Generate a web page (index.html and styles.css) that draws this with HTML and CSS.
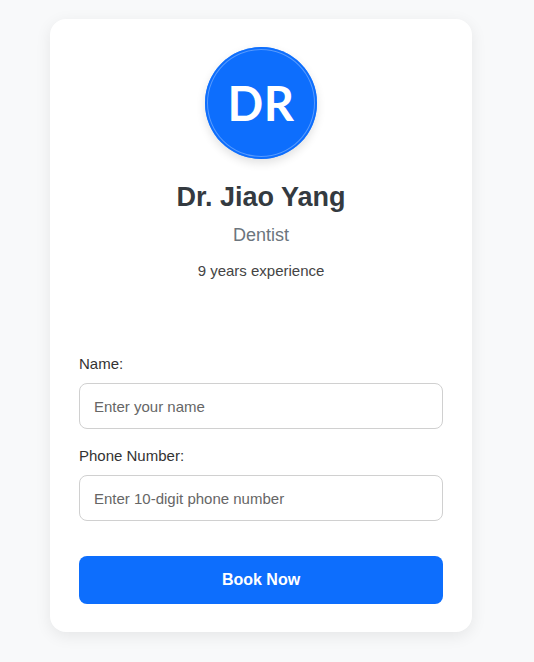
FILE: index.html
```html
<!DOCTYPE html>
<html>
<head>
<meta charset="utf-8">
<link rel="stylesheet" href="styles.css">
</head>
<body>
<div class="card">
  <div class="profile">
    <div class="avatar"><span>DR</span></div>
    <h1 class="name">Dr. Jiao Yang</h1>
    <div class="specialty">Dentist</div>
    <div class="experience">9 years experience</div>
  </div>
  <form class="form">
    <label class="label" for="name">Name:</label>
    <input class="input" id="name" type="text" placeholder="Enter your name">
    <label class="label label-phone" for="phone">Phone Number:</label>
    <input class="input" id="phone" type="text" placeholder="Enter 10-digit phone number">
    <button class="btn" type="button">Book Now</button>
  </form>
</div>
</body>
</html>
```
FILE: styles.css
```css
* { box-sizing: border-box; }
html, body { margin: 0; padding: 0; }
body {
  background: #f8f9fa;
  font-family: "Liberation Sans", Arial, sans-serif;
  padding: 19px 0 40px 50px;
}
.card {
  width: 422px;
  background: #fff;
  border-radius: 16px;
  box-shadow: 0 4px 16px rgba(0, 0, 0, 0.08);
  padding: 28px 29px;
}
.profile {
  display: flex;
  flex-direction: column;
  align-items: center;
}
.avatar {
  width: 112px;
  height: 112px;
  border-radius: 50%;
  background: #0d6efd;
  box-shadow: inset 0 0 0 2px #0d6efd, inset 0 0 0 3px rgba(255, 255, 255, 0.3), 0 4px 10px rgba(0, 0, 0, 0.12);
  display: flex;
  align-items: center;
  justify-content: center;
  color: #fff;
  font-family: Lato, "Open Sans", sans-serif;
  font-weight: 700;
  font-size: 47px;
  letter-spacing: 0.5px;
}
.name {
  margin: 23px 0 0;
  font-size: 27px;
  font-weight: 700;
  color: #343a40;
  line-height: 30px;
}
.specialty {
  margin-top: 13px;
  font-size: 18px;
  line-height: 21px;
  color: #6c757d;
}
.experience {
  margin-top: 16px;
  font-size: 15px;
  line-height: 17px;
  color: #444;
}
.form {
  display: flex;
  flex-direction: column;
  margin-top: 76px;
}
.label {
  font-size: 15px;
  line-height: 17px;
  color: #333;
}
.label-phone { margin-top: 18px; }
.input {
  margin-top: 11px;
  height: 46px;
  border: 1px solid #d0d0d0;
  border-radius: 8px;
  padding: 0 14px;
  font-family: "Liberation Sans", Arial, sans-serif;
  font-size: 15px;
  color: #333;
  background: #fff;
}
.input::placeholder { color: #666; }
.btn {
  margin-top: 35px;
  height: 48px;
  border: none;
  border-radius: 8px;
  background: #0d6efd;
  color: #fff;
  font-family: "Liberation Sans", Arial, sans-serif;
  font-weight: 700;
  font-size: 16px;
  cursor: pointer;
}
```
